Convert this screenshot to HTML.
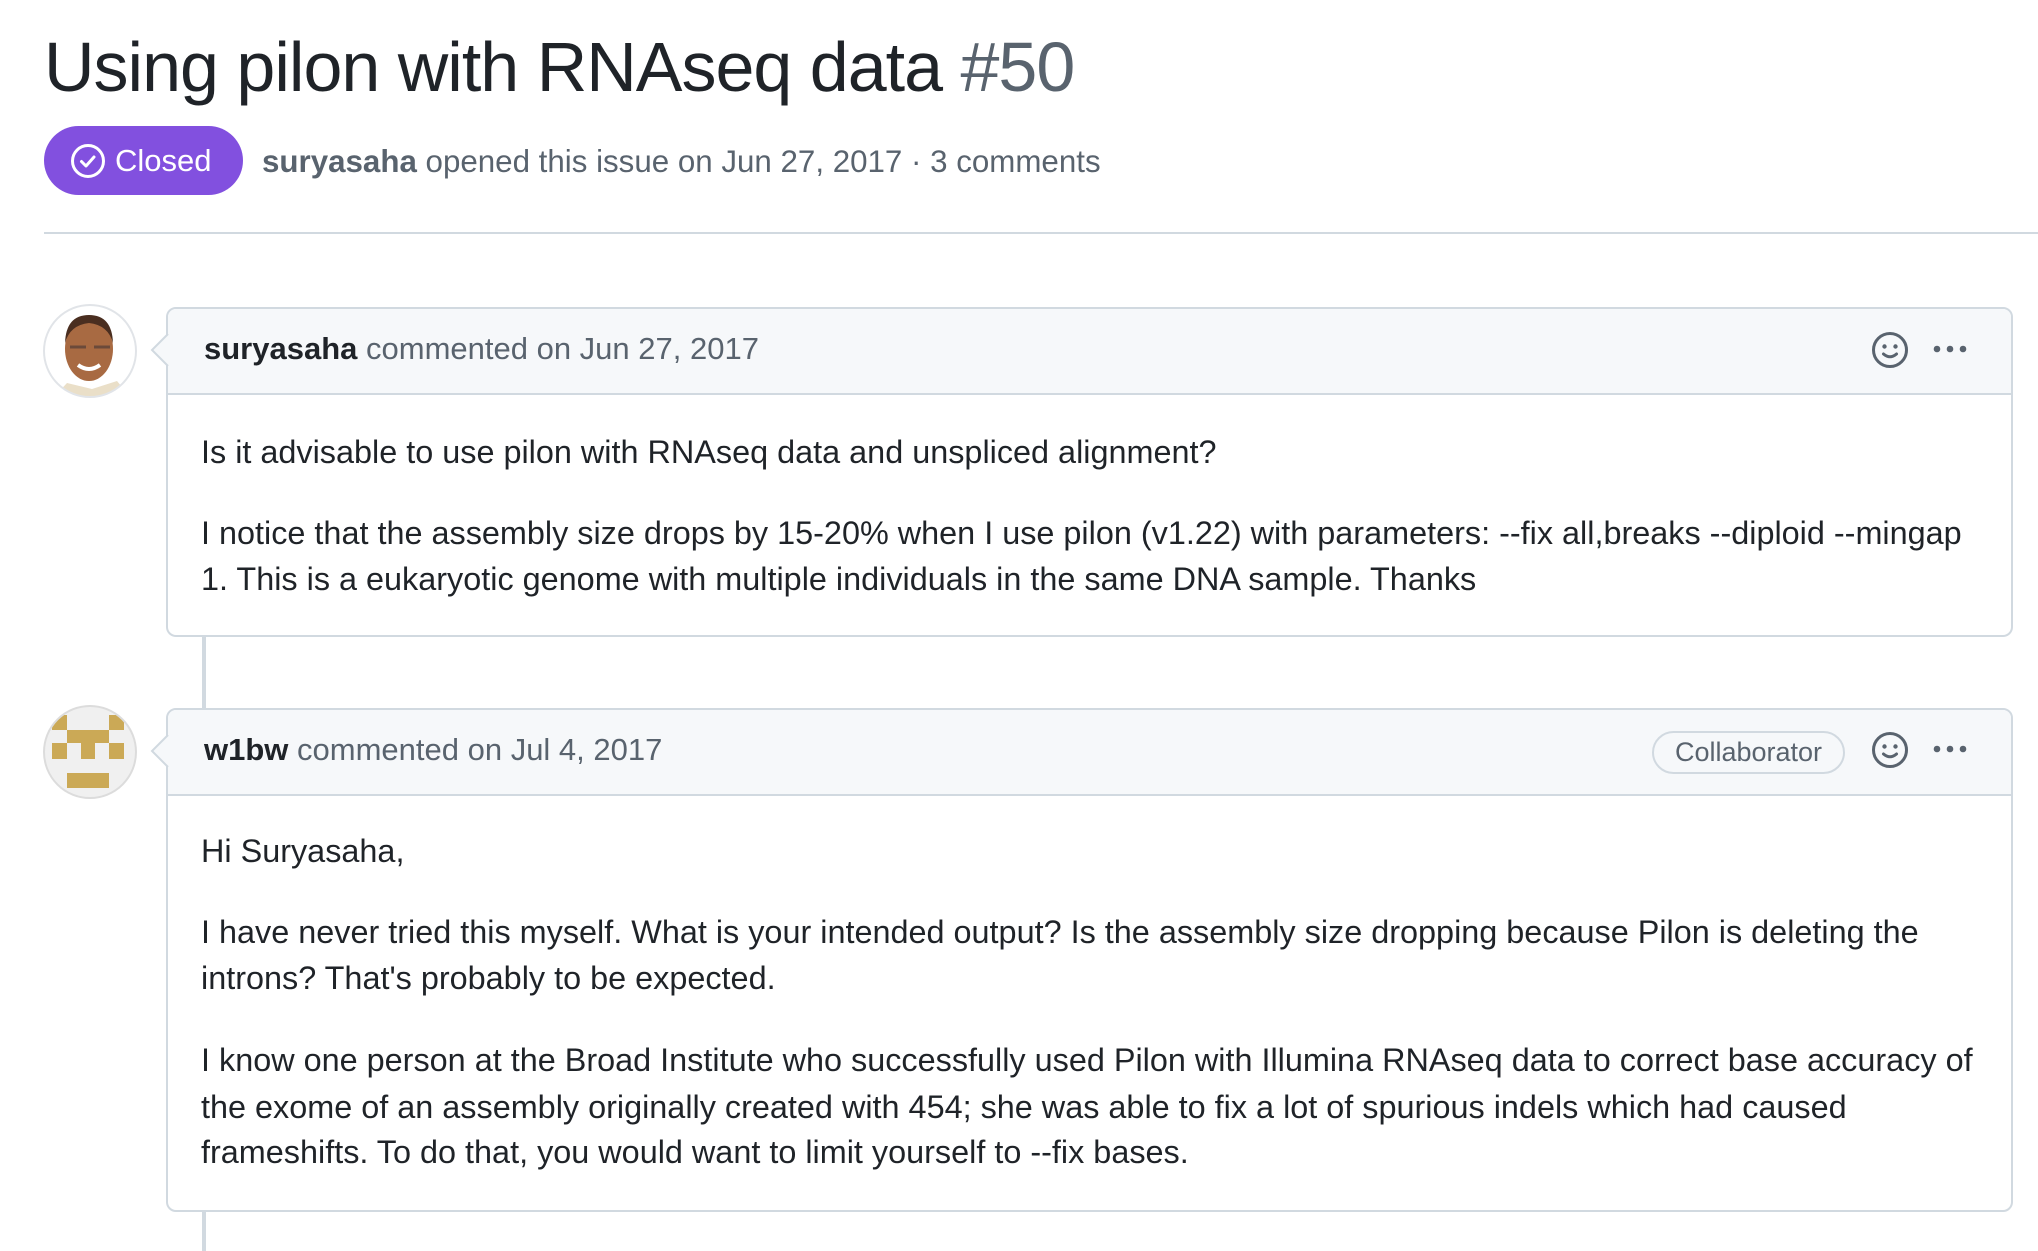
<!DOCTYPE html>
<html><head><meta charset="utf-8"><style>
*{margin:0;padding:0;box-sizing:border-box}
body{width:2038px;height:1246px;background:#fff;position:relative;overflow:hidden;font-family:"Liberation Sans",sans-serif;color:#1f2328}
.a{position:absolute;white-space:nowrap}
.t{font-size:32.4px;line-height:46px}
.h{font-size:31px;line-height:46px}
.box{position:absolute;border:2px solid #d1d9e0;border-radius:10px;background:#fff}
.hd{position:absolute;left:0;right:0;top:0;background:#f6f8fa;border-bottom:2px solid #d1d9e0;border-radius:8px 8px 0 0}
.gray{color:#59636e}
b{font-weight:700;color:#1f2328}
</style></head><body>
<div class="a" style="left:44px;top:22px;font-size:70px;line-height:90px;letter-spacing:-1px">Using pilon with RNAseq data <span style="color:#59636e;font-weight:400">#50</span></div>
<div class="a" style="left:44px;top:126px;width:199px;height:69px;border-radius:35px;background:#8250df;color:#fff;font-size:31px;line-height:69px;padding-left:71px;font-weight:400">Closed
<svg style="position:absolute;left:26px;top:17px" width="36" height="36" viewBox="0 0 36 36"><circle cx="18" cy="18" r="15.5" fill="none" stroke="#fff" stroke-width="3"/><path d="M11.5 18.5l4.5 4.5 8-9" fill="none" stroke="#fff" stroke-width="3" stroke-linecap="round" stroke-linejoin="round"/></svg></div>
<div class="a gray" style="left:262px;top:139px;font-size:31.3px;line-height:46px"><b style="color:#59636e">suryasaha</b> opened this issue on Jun 27, 2017 · 3 comments</div>
<div class="a" style="left:44px;top:232px;width:2000px;height:2px;background:#d1d9e0"></div>

<div class="a" style="left:202px;top:636px;width:4px;height:72px;background:#d1d9e0"></div>
<div class="a" style="left:202px;top:1211px;width:4px;height:40px;background:#d1d9e0"></div>

<svg class="a" style="left:42px;top:303px" width="96" height="96" viewBox="0 0 96 96"><defs><clipPath id="c1"><circle cx="48" cy="48" r="46"/></clipPath></defs><circle cx="48" cy="48" r="46" fill="#fff"/><g clip-path="url(#c1)"><path d="M10 96 L25 80 L50 86 L75 78 L90 96Z" fill="#eadfc8"/><ellipse cx="47" cy="46" rx="24" ry="32" fill="#a86a42"/><path d="M23 40 Q24 12 47 12 Q70 12 71 40 Q66 22 47 20 Q28 22 23 40Z" fill="#4a2e20"/><path d="M28 44h16M52 44h16" stroke="#6b4a3a" stroke-width="3"/><path d="M36 62 Q47 70 58 62" stroke="#fff" stroke-width="4" fill="none"/></g><circle cx="48" cy="48" r="46" fill="none" stroke="#e1e4e8" stroke-width="2"/></svg>

<svg class="a" style="left:42px;top:705px" width="96" height="96" viewBox="42 705 96 96"><defs><clipPath id="c2"><circle cx="90" cy="752" r="46"/></clipPath></defs><circle cx="90" cy="752" r="46" fill="#f0f0f0"/><g clip-path="url(#c2)" fill="#cba956"><rect x="52" y="715" width="15" height="15"/><rect x="109" y="715" width="15" height="15"/><rect x="67" y="730" width="42" height="13"/><rect x="52" y="743" width="15" height="16"/><rect x="81" y="743" width="14" height="16"/><rect x="109" y="743" width="15" height="16"/><rect x="67" y="773" width="42" height="15"/></g><circle cx="90" cy="752" r="46" fill="none" stroke="#dcdcdc" stroke-width="2"/></svg>

<!-- box 1 -->
<div class="box" style="left:166px;top:307px;width:1847px;height:330px">
 <div class="hd" style="height:86px"></div>
</div>
<svg class="a" style="left:150px;top:333px" width="20" height="34"><path d="M18 1 L2 17 L18 33" fill="#f6f8fa" stroke="#d1d9e0" stroke-width="2"/></svg>
<div class="a h gray" style="left:204px;top:326px"><b>suryasaha</b> commented on Jun 27, 2017</div>
<svg class="a" style="left:1871px;top:331px" width="38" height="38" viewBox="0 0 38 38"><circle cx="19" cy="19" r="16.5" fill="none" stroke="#59636e" stroke-width="3"/><circle cx="13.5" cy="15.5" r="2.2" fill="#59636e"/><circle cx="24.5" cy="15.5" r="2.2" fill="#59636e"/><path d="M12.5 23 Q19 28.5 25.5 23" fill="none" stroke="#59636e" stroke-width="3" stroke-linecap="round"/></svg>
<svg class="a" style="left:1932px;top:342px" width="40" height="14"><circle cx="5" cy="7" r="3.3" fill="#59636e"/><circle cx="18" cy="7" r="3.3" fill="#59636e"/><circle cx="31" cy="7" r="3.3" fill="#59636e"/></svg>
<div class="a t" style="left:201px;top:429px">Is it advisable to use pilon with RNAseq data and unspliced alignment?</div>
<div class="a t" style="left:201px;top:510px">I notice that the assembly size drops by 15-20% when I use pilon (v1.22) with parameters: --fix all,breaks --diploid --mingap</div>
<div class="a t" style="left:201px;top:556px">1. This is a eukaryotic genome with multiple individuals in the same DNA sample. Thanks</div>

<!-- box 2 -->
<div class="box" style="left:166px;top:708px;width:1847px;height:504px">
 <div class="hd" style="height:86px"></div>
</div>
<svg class="a" style="left:150px;top:734px" width="20" height="34"><path d="M18 1 L2 17 L18 33" fill="#f6f8fa" stroke="#d1d9e0" stroke-width="2"/></svg>
<div class="a h gray" style="left:204px;top:727px"><b>w1bw</b> commented on Jul 4, 2017</div>
<div class="a gray" style="left:1652px;top:731px;width:193px;height:43px;border:2px solid #d1d9e0;border-radius:22px;font-size:27px;line-height:39px;text-align:center">Collaborator</div>
<svg class="a" style="left:1871px;top:731px" width="38" height="38" viewBox="0 0 38 38"><circle cx="19" cy="19" r="16.5" fill="none" stroke="#59636e" stroke-width="3"/><circle cx="13.5" cy="15.5" r="2.2" fill="#59636e"/><circle cx="24.5" cy="15.5" r="2.2" fill="#59636e"/><path d="M12.5 23 Q19 28.5 25.5 23" fill="none" stroke="#59636e" stroke-width="3" stroke-linecap="round"/></svg>
<svg class="a" style="left:1932px;top:742px" width="40" height="14"><circle cx="5" cy="7" r="3.3" fill="#59636e"/><circle cx="18" cy="7" r="3.3" fill="#59636e"/><circle cx="31" cy="7" r="3.3" fill="#59636e"/></svg>
<div class="a t" style="left:201px;top:828px">Hi Suryasaha,</div>
<div class="a t" style="left:201px;top:909px">I have never tried this myself. What is your intended output? Is the assembly size dropping because Pilon is deleting the</div>
<div class="a t" style="left:201px;top:955px">introns? That's probably to be expected.</div>
<div class="a t" style="left:201px;top:1037px">I know one person at the Broad Institute who successfully used Pilon with Illumina RNAseq data to correct base accuracy of</div>
<div class="a t" style="left:201px;top:1084px">the exome of an assembly originally created with 454; she was able to fix a lot of spurious indels which had caused</div>
<div class="a t" style="left:201px;top:1129px">frameshifts. To do that, you would want to limit yourself to --fix bases.</div>
</body></html>
